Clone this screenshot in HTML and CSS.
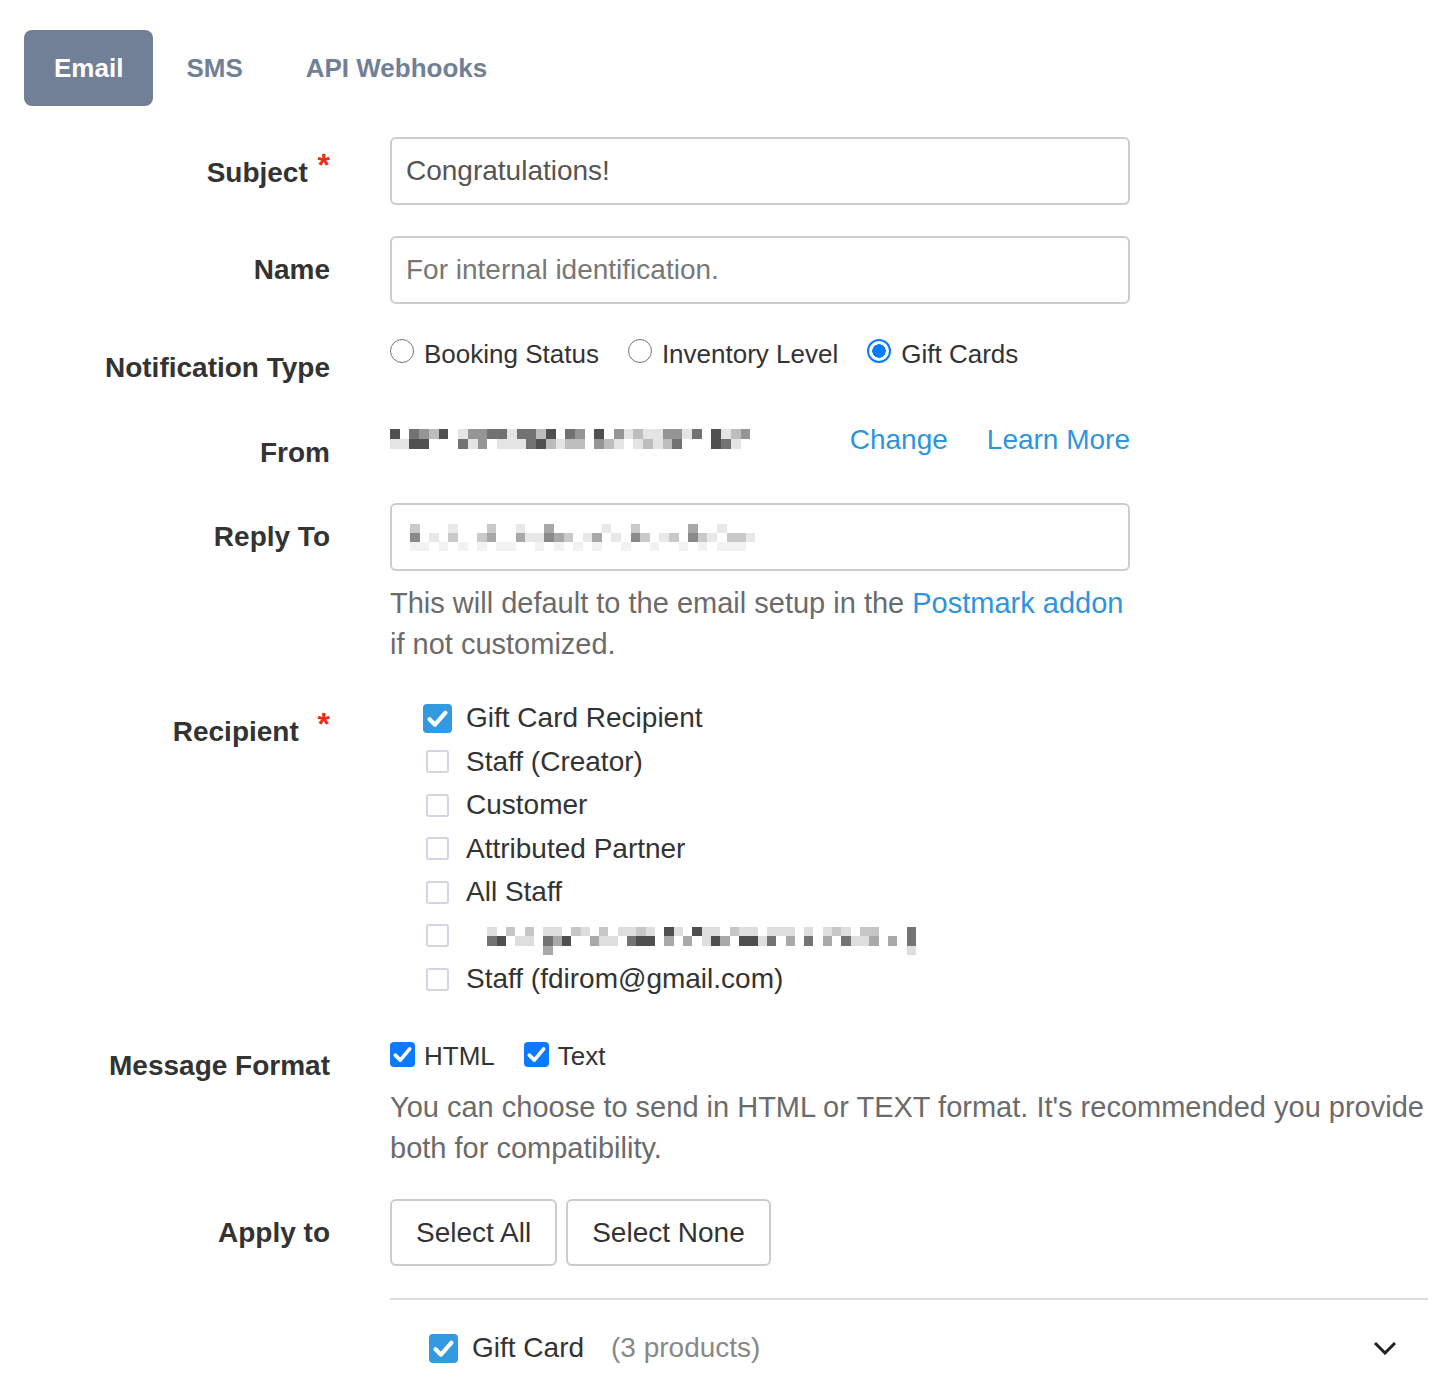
FILE: index.html
```html
<!DOCTYPE html>
<html lang="en">
<head>
    <meta charset="UTF-8">
    <meta name="viewport" content="width=device-width, initial-scale=1.0">
    <title>Notification Settings</title>
    <link rel="stylesheet" href="styles.css">
</head>
<body>

    <div class="page">
        <nav class="tabs">
            <a href="#" class="tab tab-active">Email</a>
            <a href="#" class="tab">SMS</a>
            <a href="#" class="tab">API Webhooks</a>
        </nav>

        <form class="form">
            <div class="row">
                <label class="row-label" for="subject">Subject <span class="req">*</span></label>
                <div class="field">
                    <input id="subject" class="text-input" type="text" value="Congratulations!">
                </div>
            </div>

            <div class="row">
                <label class="row-label" for="name">Name</label>
                <div class="field">
                    <input id="name" class="text-input" type="text" placeholder="For internal identification.">
                </div>
            </div>

            <div class="row">
                <div class="row-label">Notification Type</div>
                <div class="field radios">
                    <label class="radio-option"><span class="radio"></span>Booking Status</label>
                    <label class="radio-option"><span class="radio"></span>Inventory Level</label>
                    <label class="radio-option"><span class="radio radio-checked"></span>Gift Cards</label>
                </div>
            </div>

            <div class="row">
                <div class="row-label">From</div>
                <div class="field from-line">
                    <!-- blurred sender address -->
                    <svg class="blur blur-from" viewBox="0 0 38 2" preserveAspectRatio="none" shape-rendering="crispEdges">
                        <path fill="#505050" d="M0 0h1v1h-1zM5 0h1v1h-1zM16 0h1v1h-1zM21 0h1v1h-1zM33 0h1v1h-1zM2 1h2v1h-2zM15 1h1v1h-1zM33 1h1v1h-1z"/>
                        <path fill="#727272" d="M2 0h1v1h-1zM10 0h2v1h-2zM13 0h2v1h-2zM18 0h1v1h-1zM31 0h1v1h-1zM7 1h1v1h-1zM14 1h1v1h-1zM29 1h1v1h-1zM34 1h1v1h-1z"/>
                        <path fill="#959595" d="M3 0h1v1h-1zM8 0h2v1h-2zM19 0h1v1h-1zM23 0h1v1h-1zM28 0h2v1h-2zM36 0h1v1h-1zM9 1h1v1h-1zM21 1h1v1h-1z"/>
                        <path fill="#bdbdbd" d="M4 0h1v1h-1zM15 0h1v1h-1zM25 0h1v1h-1zM35 0h1v1h-1zM16 1h1v1h-1zM18 1h2v1h-2zM22 1h1v1h-1zM26 1h1v1h-1zM28 1h1v1h-1z"/>
                        <path fill="#e4e4e4" d="M7 0h1v1h-1zM12 0h1v1h-1zM24 0h1v1h-1zM26 0h2v1h-2zM30 0h1v1h-1zM34 0h1v1h-1zM0 1h2v1h-2zM8 1h1v1h-1zM11 1h3v1h-3zM17 1h1v1h-1zM23 1h1v1h-1zM25 1h1v1h-1zM27 1h1v1h-1zM35 1h1v1h-1z"/>
                    </svg>
                    <div class="from-links">
                        <a href="#" class="link">Change</a>
                        <a href="#" class="link">Learn More</a>
                    </div>
                </div>
            </div>

            <div class="row">
                <div class="row-label">Reply To</div>
                <div class="field">
                    <div class="text-input fake-input">
                        <svg class="blur blur-reply" viewBox="0 0 37 3" preserveAspectRatio="none" shape-rendering="crispEdges">
                            <path fill="#c9c9c9" d="M0 0h1v1h-1zM8 0h1v1h-1zM23 0h1v1h-1zM4 1h1v1h-1zM7 1h1v1h-1zM16 1h1v1h-1zM24 1h1v1h-1zM27 1h1v1h-1zM30 1h1v1h-1zM33 1h2v1h-2z"/>
                            <path fill="#a8a8a8" d="M14 0h1v1h-1zM29 0h1v1h-1zM8 1h1v1h-1zM11 1h1v1h-1zM15 1h1v1h-1zM19 1h1v1h-1z"/>
                            <path fill="#8a8a8a" d="M0 1h1v1h-1zM14 1h1v1h-1zM23 1h1v1h-1zM29 1h1v1h-1z"/>
                            <path fill="#e8e8e8" d="M4 0h1v1h-1zM11 0h1v1h-1zM20 0h1v1h-1zM32 0h1v1h-1zM2 1h1v1h-1zM12 1h2v1h-2zM18 1h1v1h-1zM21 1h1v1h-1zM26 1h1v1h-1zM31 1h1v1h-1zM35 1h1v1h-1z"/>
                            <path fill="#f2f2f2" d="M0 2h2v1h-2zM3 2h1v1h-1zM5 2h1v1h-1zM7 2h1v1h-1zM9 2h2v1h-2zM13 2h1v1h-1zM15 2h1v1h-1zM17 2h1v1h-1zM19 2h1v1h-1zM22 2h1v1h-1zM25 2h1v1h-1zM28 2h1v1h-1zM30 2h1v1h-1zM32 2h3v1h-3z"/>
                        </svg>
                    </div>
                    <p class="hint hint-narrow">This will default to the email setup in the <a href="#" class="link">Postmark addon</a> if not customized.</p>
                </div>
            </div>

            <div class="row">
                <div class="row-label">Recipient <span class="req req-wide">*</span></div>
                <div class="field check-list">
                    <label class="check"><span class="box box-checked"><svg viewBox="0 0 16 16"><polyline points="3.6,8.4 6.6,11.4 12.4,4.8"/></svg></span>Gift Card Recipient</label>
                    <label class="check"><span class="box"><span class="box-empty"></span></span>Staff (Creator)</label>
                    <label class="check"><span class="box"><span class="box-empty"></span></span>Customer</label>
                    <label class="check"><span class="box"><span class="box-empty"></span></span>Attributed Partner</label>
                    <label class="check"><span class="box"><span class="box-empty"></span></span>All Staff</label>
                    <label class="check">
                        <span class="box"><span class="box-empty"></span></span>
                        <svg class="blur blur-staff" viewBox="0 0 47 3" preserveAspectRatio="none" shape-rendering="crispEdges">
                            <path fill="#dedede" d="M1 0h1v1h-1zM7 0h2v1h-2zM11 0h1v1h-1zM15 0h2v1h-2zM18 0h1v1h-1zM21 0h1v1h-1zM24 0h2v1h-2zM28 0h2v1h-2zM31 0h3v1h-3zM35 0h1v1h-1zM37 0h1v1h-1zM39 0h1v1h-1zM4 1h2v1h-2zM13 1h2v1h-2zM24 1h1v1h-1zM30 1h1v1h-1zM40 1h2v1h-2zM46 2h1v1h-1z"/>
                            <path fill="#c6c6c6" d="M3 0h1v1h-1zM5 0h1v1h-1zM10 0h1v1h-1zM13 0h1v1h-1zM17 0h1v1h-1zM27 0h1v1h-1zM38 0h1v1h-1zM41 0h2v1h-2z"/>
                            <path fill="#a9a9a9" d="M8 1h1v1h-1zM12 1h1v1h-1zM20 1h1v1h-1zM22 1h1v1h-1zM26 1h1v1h-1zM33 1h1v1h-1zM37 1h1v1h-1zM42 1h1v1h-1zM44 1h1v1h-1zM7 2h1v1h-1z"/>
                            <path fill="#737373" d="M1 1h1v1h-1zM7 1h1v1h-1zM16 1h1v1h-1zM31 1h1v1h-1zM35 1h1v1h-1zM39 1h1v1h-1zM46 0h1v2h-1z"/>
                            <path fill="#4f4f4f" d="M2 1h1v1h-1zM9 1h1v1h-1zM17 1h2v1h-2zM20 0h1v1h-1zM23 0h1v1h-1zM25 1h1v1h-1zM28 1h2v1h-2z"/>
                        </svg>
                    </label>
                    <label class="check"><span class="box"><span class="box-empty"></span></span>Staff (fdirom@gmail.com)</label>
                </div>
            </div>

            <div class="row">
                <div class="row-label">Message Format</div>
                <div class="field">
                    <div class="format-options">
                        <label class="format-option"><span class="small-box"><svg viewBox="0 0 16 16"><polyline points="3.4,8.4 6.6,11.6 12.6,4.4"/></svg></span>HTML</label>
                        <label class="format-option"><span class="small-box"><svg viewBox="0 0 16 16"><polyline points="3.4,8.4 6.6,11.6 12.6,4.4"/></svg></span>Text</label>
                    </div>
                    <p class="hint hint-tight">You can choose to send in HTML or TEXT format. It's recommended you provide both for compatibility.</p>
                </div>
            </div>

            <div class="row">
                <div class="row-label">Apply to</div>
                <div class="field">
                    <div class="btn-group">
                        <button type="button" class="btn">Select All</button>
                        <button type="button" class="btn">Select None</button>
                    </div>
                    <div class="products">
                        <div class="product-row">
                            <span class="box box-checked"><svg viewBox="0 0 16 16"><polyline points="3.6,8.4 6.6,11.4 12.4,4.8"/></svg></span>
                            <span class="product-name">Gift Card</span>
                            <span class="product-count">(3 products)</span>
                            <svg class="chevron" viewBox="0 0 24 14"><polyline points="2,2 12,12 22,2"/></svg>
                        </div>
                    </div>
                </div>
            </div>
        </form>
    </div>

</body>
</html>
```

FILE: styles.css
```css
body {
    margin: 0;
    font-family: "Liberation Sans", Arial, sans-serif;
    color: #333;
    background: #fff;
}

.page {
    padding: 30px 0 0 24px;
}

/* tabs */
.tabs {
    display: flex;
    gap: 3px;
}

.tab {
    height: 76px;
    padding: 0 30px;
    display: flex;
    align-items: center;
    font-size: 26px;
    font-weight: bold;
    color: #718096;
    text-decoration: none;
    border-radius: 8px;
}

.tab-active {
    background: #718096;
    color: #fff;
}

/* form rows */
.form {
    margin-top: 31px;
    display: flex;
    flex-direction: column;
    gap: 30.5px;
}

.row {
    display: grid;
    grid-template-columns: 306px 1fr;
    column-gap: 60px;
    align-items: start;
}

.row-label {
    padding-top: 14px;
    line-height: 40px;
    font-size: 28px;
    font-weight: bold;
    text-align: right;
    color: #333;
}

.req {
    color: #eb2d17;
    font-size: 32px;
    position: relative;
    top: -6px;
    margin-left: 2px;
}

.req-wide {
    margin-left: 11px;
}

.text-input {
    display: block;
    width: 740px;
    height: 68px;
    box-sizing: border-box;
    padding: 0 14px;
    border: 2px solid #ccc;
    border-radius: 6px;
    font-family: inherit;
    font-size: 28px;
    color: #555;
    background: #fff;
}

.text-input::placeholder {
    color: #777;
}

.fake-input {
    display: flex;
    align-items: center;
    padding-left: 18px;
}

.link {
    color: #2d95de;
    text-decoration: none;
}

.hint {
    margin: 12px 0 0;
    font-size: 29px;
    line-height: 41px;
    color: #6b6b6b;
}

.hint-narrow {
    max-width: 748px;
}

.hint-tight {
    margin-top: 5px;
}

/* radios */
.radios {
    display: flex;
    align-items: flex-start;
    gap: 29px;
    height: 40px;
    line-height: 40px;
    font-size: 26px;
}

.radio-option {
    display: flex;
    align-items: center;
    gap: 10px;
    height: 40px;
}

.radio {
    width: 24px;
    height: 24px;
    box-sizing: border-box;
    border: 1.5px solid #777;
    border-radius: 50%;
    margin-top: -6px;
    background: #fff;
}

.radio-checked {
    border: 2px solid #0a7bff;
    background: radial-gradient(circle, #0a7bff 0 6.5px, #fff 7px);
}

/* from line */
.from-line {
    width: 740px;
    height: 42px;
    display: flex;
    align-items: center;
    justify-content: space-between;
    line-height: 42px;
    font-size: 28px;
}

.from-links {
    display: flex;
    gap: 39px;
}

.blur {
    display: block;
}

.blur-from {
    width: 370px;
    height: 20px;
    margin-top: -2px;
}

.blur-reply {
    width: 355px;
    height: 27px;
}

.blur-staff {
    width: 438px;
    height: 28px;
    margin-left: 12px;
    margin-top: 10px;
}

/* checkbox lists */
.check-list {
    padding: 1px 0 0 33px;
}

.check {
    display: flex;
    align-items: center;
    gap: 14px;
    height: 43.5px;
    font-size: 28px;
}

.box {
    width: 29px;
    height: 29px;
    flex-shrink: 0;
    display: flex;
    align-items: center;
    justify-content: center;
    border-radius: 4px;
}

.box-checked {
    background: #3399e0;
}

.box svg,
.small-box svg {
    width: 100%;
    height: 100%;
}

.box polyline,
.small-box polyline {
    fill: none;
    stroke: #fff;
    stroke-width: 2.3;
    stroke-linecap: round;
    stroke-linejoin: round;
}

.box-empty {
    width: 23px;
    height: 23px;
    box-sizing: border-box;
    border: 2px solid #d6d4e4;
    border-radius: 3px;
}

.format-options {
    display: flex;
    gap: 29px;
    height: 50px;
    align-items: center;
    font-size: 26px;
}

.format-option {
    display: flex;
    align-items: center;
    gap: 9px;
}

.small-box {
    width: 25px;
    height: 25px;
    border-radius: 4px;
    background: #0a7bff;
    margin-top: -4px;
}

/* apply to */
.btn-group {
    display: flex;
    gap: 9px;
}

.btn {
    height: 67px;
    padding: 0 24px;
    border: 2px solid #ccc;
    border-radius: 6px;
    background: #fff;
    font-family: inherit;
    font-size: 28px;
    color: #333;
}

.products {
    margin: 32px 4px 0 0;
    border-top: 2px solid #ddd;
}

.product-row {
    display: flex;
    align-items: center;
    padding: 30px 31px 30px 39px;
    line-height: 36px;
    font-size: 28px;
}

.product-name {
    margin-left: 14px;
}

.product-count {
    margin-left: 27px;
    color: #888;
}

.chevron {
    margin-left: auto;
    width: 24px;
    height: 14px;
}

.chevron polyline {
    fill: none;
    stroke: #222;
    stroke-width: 3;
}
```
